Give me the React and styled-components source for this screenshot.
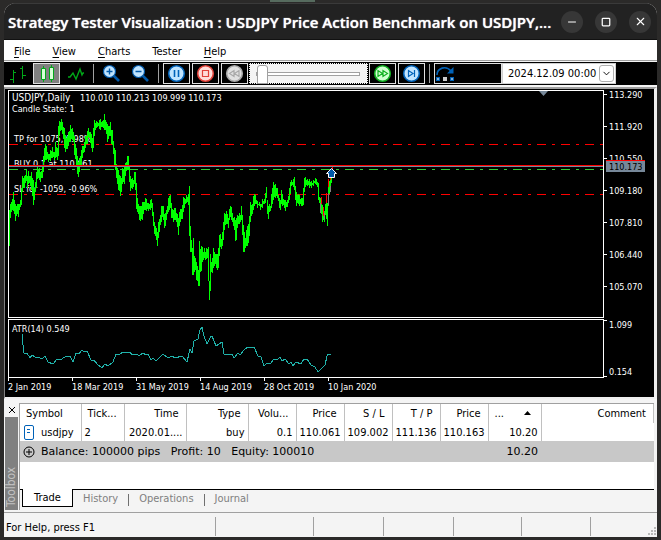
import React from 'react';
import styled, { createGlobalStyle } from 'styled-components';
import { FiMinus, FiSquare, FiX, FiChevronDown } from 'react-icons/fi';

const ui = '"DejaVu Sans Condensed", "DejaVu Sans", sans-serif';

const GlobalStyle = createGlobalStyle`
    * {
        box-sizing: border-box;
    }
    body {
        margin: 0;
        min-height: 100vh;
        background: #2b2a29;
        font-family: ${ui};
        font-size: 11px;
        color: #000;
    }
    button, select, input {
        font: inherit;
        color: inherit;
        margin: 0;
        padding: 0;
    }
`;

const Desktop = styled.div`
    min-height: 100vh;
    padding: 3px 4px;
    display: flex;
    flex-direction: column;
    background: linear-gradient(#566b5e, #566b5e) no-repeat 270px 0 / 45px 2px;
`;

const Window = styled.main`
    flex: 1;
    display: flex;
    flex-direction: column;
    background: #f4f4f4;
    border-radius: 12px 12px 0 0;
    overflow: hidden;
`;

const TitleBar = styled.header`
    height: 37px;
    padding: 0 6px 0 4px;
    display: flex;
    align-items: center;
    justify-content: space-between;
    background: #222;
    border-top: 1px solid #3a3a3a;
    border-bottom: 1px solid #111;
`;

const Title = styled.h1`
    margin: 0;
    color: #fff;
    font: 600 15px/22px "Open Sans", sans-serif;
    text-shadow: 0 0 1px #fff;
    white-space: nowrap;
`;

const WindowButtons = styled.div`
    display: flex;
    gap: 12px;
`;

const WindowButton = styled.button`
    width: 22px;
    height: 22px;
    display: flex;
    align-items: center;
    justify-content: center;
    border: 0;
    border-radius: 50%;
    background: #373737;
    color: #fff;
`;

const MenuBar = styled.nav`
    height: 21px;
    padding: 3px 10px 0;
    display: flex;
    align-items: center;
    gap: 22px;
    background: #fff;
    border-bottom: 1px solid #a0a0a0;
`;

const MenuItem = styled.button`
    border: 0;
    background: none;
    line-height: 16px;
    u {
        text-underline-offset: 2px;
    }
`;

const Toolbar = styled.div`
    height: 23px;
    margin-top: 1px;
    padding: 1px 2px 1px 0;
    display: flex;
    align-items: stretch;
    gap: 2px;
    background: #000;
`;

const ToolButton = styled.button`
    width: ${(p) => p.$width || 27}px;
    display: flex;
    align-items: center;
    justify-content: ${(p) => (p.$width ? 'flex-start' : 'center')};
    background: ${(p) => (p.$active ? '#808080' : '#000')};
    border: 1px solid ${(p) => (p.$flat ? 'transparent' : '#e0e0e0')};
`;

const Separator = styled.span`
    width: 1px;
    margin: 1px 2px;
    background: #a0a0a0;
`;

const SpeedBox = styled.div`
    flex: 0 1 119px;
    margin: 0 -1px;
    display: flex;
    align-items: center;
    background: #f4f4f4;
    border: 1px dotted #000;
`;

const Speed = styled.input`
    appearance: none;
    width: 100%;
    height: 19px;
    padding: 0 7px 0 6px;
    background: none;
    &::-webkit-slider-runnable-track {
        height: 4px;
        background: #fff;
        border: 1px solid #a0a0a0;
    }
    &::-webkit-slider-thumb {
        appearance: none;
        width: 11px;
        height: 19px;
        margin-top: -8px;
        background: #fff;
        border: 1px solid #a0a0a0;
        border-radius: 3px 3px 0 0;
    }
`;

const DateBox = styled.div`
    position: relative;
    width: 114px;
    margin-left: -2px;
    background: #fff;
    border: 1px solid #d0d0d0;
`;

const DateSelect = styled.select`
    appearance: none;
    width: 100%;
    height: 100%;
    padding: 0 14px 0 5px;
    border: 0;
    background: none;
`;

const DateArrow = styled.span`
    position: absolute;
    top: 1px;
    right: 1px;
    bottom: 1px;
    width: 15px;
    display: flex;
    align-items: center;
    justify-content: center;
    border: 1px solid #b0b0b0;
    border-radius: 3px;
    pointer-events: none;
`;

const ChartArea = styled.section`
    margin-top: 2px;
    padding: 1px 0 6px 3px;
    background: #000;
    border-style: solid;
    border-color: #a0a0a0 #f0f0f0 #f0f0f0 #808080;
    border-width: 2px 3px 2px 1px;
`;

const ChartRow = styled.div`
    display: grid;
    grid-template-columns: 1fr 50px;
    margin-top: ${(p) => p.$gap || 0}px;
    svg {
        display: block;
        width: 100%;
        font-size: 9px;
        fill: #fff;
    }
`;

const Plot = styled.div`
    border: 1px solid #fff;
`;

const Dates = styled.div`
    display: flex;
    height: 13px;
`;

const DateMark = styled.span`
    width: 64px;
    flex: none;
    padding-top: 3px;
    font-size: 9px;
    line-height: 12px;
    color: #fff;
    white-space: nowrap;
    background: linear-gradient(#fff, #fff) no-repeat 0 0 / 1px 3px;
`;

const Toolbox = styled.section`
    display: flex;
    flex: 1;
    margin-top: 4px;
    padding: 0 3px 2px 1px;
`;

const Side = styled.div`
    width: 14px;
    display: flex;
    flex-direction: column;
`;

const CloseButton = styled.button`
    height: 14px;
    display: flex;
    align-items: center;
    justify-content: center;
    border: 0;
    background: none;
`;

const SideLabel = styled.div`
    flex: 1;
    margin-right: 1px;
    padding-top: 3px;
    writing-mode: vertical-rl;
    transform: rotate(180deg);
    background: #808080;
    color: #c0c0c0;
    font-size: 12px;
    line-height: 13px;
`;

const Panel = styled.div`
    flex: 1;
    min-width: 0;
    display: flex;
    flex-direction: column;
    border-top: 1px solid #a0a0a0;
    border-left: 1px solid #a0a0a0;
`;

const TableBox = styled.div`
    flex: 1;
    background: #fff;
`;

const Trades = styled.table`
    width: 100%;
    table-layout: fixed;
    border-collapse: collapse;
    th, td {
        height: 18px;
        padding: 0 3px;
        border-right: 1px solid #c0c0c0;
        font-weight: normal;
        text-align: right;
        white-space: nowrap;
        overflow: hidden;
    }
    th {
        height: 19px;
        padding: 0 7px 0 6px;
    }
    tbody td:last-child {
        border-right: 0;
    }
    th:nth-child(-n + 2), td:nth-child(-n + 2), th:nth-child(10) {
        text-align: left;
    }
    th svg {
        float: right;
        margin: 4px 3px 0 0;
    }
`;

const Summary = styled.tr`
    background: #c8c8c8;
    font-family: "DejaVu Sans", sans-serif;
    && td {
        height: 21px;
        border: 0;
        text-align: right;
    }
    && td:first-child {
        text-align: left;
    }
`;

const Cell = styled.span`
    display: flex;
    align-items: center;
    gap: ${(p) => p.$gap}px;
    white-space: pre;
`;

const Tabs = styled.div`
    display: flex;
    height: 21px;
    border-top: 1px solid #000;
    padding-left: 2px;
`;

const Tab = styled.button`
    height: 18px;
    margin-top: -1px;
    padding: 0 ${(p) => (p.$active ? 11 : 10)}px;
    border: ${(p) => (p.$active ? '1px solid #000' : '0')};
    border-top: 0;
    background: ${(p) => (p.$active ? '#fff' : 'none')};
    color: ${(p) => (p.$active ? '#000' : '#808080')};
`;

const TabLine = styled.span`
    width: 1px;
    height: 12px;
    margin-top: 4px;
    background: #707070;
`;

const StatusBar = styled.footer`
    height: 25px;
    display: grid;
    grid-template-columns: 212px 98px 70px 70px 68px 69px 1fr;
    padding-top: 4px;
    border-top: 1px solid #a0a0a0;
`;

const StatusCell = styled.div`
    padding-left: 2px;
    height: 19px;
    line-height: 22px;
    border-right: 1px solid #a0a0a0;
    white-space: nowrap;
    &:last-child {
        display: flex;
        align-items: flex-end;
        justify-content: flex-end;
        border: 0;
    }
`;

/* daily bars: x, high, low */
const BARS = [
    [0, 119, 155], [1, 113, 127], [2, 111, 121], [4, 101, 120], [6, 113, 130], [8, 113, 123], [9, 113, 126], [11, 109, 116],
    [12, 97, 114], [13, 85, 101], [15, 85, 97], [17, 79, 90], [18, 85, 97], [19, 80, 93], [21, 85, 95], [22, 81, 99],
    [24, 89, 114], [25, 97, 109], [27, 81, 97], [28, 76, 88], [30, 77, 89], [31, 81, 91], [33, 74, 87], [34, 65, 81],
    [35, 57, 71], [36, 53, 69], [37, 55, 69], [39, 63, 71], [41, 59, 70], [43, 56, 67], [45, 61, 69], [46, 51, 67],
    [48, 57, 69], [49, 35, 65], [50, 30, 44], [52, 28, 39], [53, 31, 43], [55, 37, 57], [56, 44, 61], [58, 45, 58],
    [59, 41, 55], [61, 34, 51], [63, 37, 49], [64, 41, 51], [65, 45, 64], [67, 57, 75], [68, 65, 83], [69, 71, 86],
    [70, 67, 81], [72, 59, 74], [73, 55, 67], [75, 51, 61], [76, 45, 57], [78, 40, 53], [79, 37, 46], [81, 41, 52],
    [82, 43, 57], [83, 47, 61], [84, 37, 57], [85, 29, 45], [87, 30, 37], [88, 31, 36], [90, 29, 38], [91, 28, 39],
    [93, 30, 36], [94, 29, 37], [95, 23, 39], [97, 31, 43], [98, 33, 51], [99, 35, 48], [101, 31, 45], [102, 39, 53],
    [103, 39, 54], [105, 57, 75], [106, 59, 79], [107, 73, 87], [108, 77, 93], [109, 79, 99], [111, 85, 105], [112, 87, 101],
    [113, 77, 93], [115, 75, 93], [116, 72, 85], [118, 65, 79], [119, 65, 79], [120, 75, 91], [121, 85, 100], [123, 87, 98],
    [124, 89, 96], [125, 81, 93], [126, 81, 99], [127, 92, 118], [128, 107, 121], [130, 115, 129], [131, 115, 130],
    [133, 111, 129], [134, 111, 123], [136, 107, 119], [137, 108, 120], [139, 112, 120], [141, 109, 119], [142, 108, 117],
    [143, 112, 125], [144, 121, 135], [145, 131, 143], [146, 135, 145], [147, 137, 149], [148, 141, 155], [149, 131, 147],
    [150, 128, 141], [152, 115, 131], [153, 115, 126], [154, 115, 129], [155, 123, 137], [156, 122, 135], [157, 119, 129],
    [159, 107, 121], [160, 105, 119], [161, 104, 117], [162, 112, 127], [164, 119, 131], [165, 117, 129], [166, 117, 129],
    [168, 123, 136], [169, 127, 144], [170, 121, 135], [171, 118, 131], [173, 114, 128], [174, 106, 121], [175, 107, 117],
    [177, 104, 112], [179, 103, 114], [180, 95, 145], [181, 135, 161], [182, 149, 161], [183, 157, 184], [184, 147, 184],
    [185, 165, 181], [186, 167, 179], [187, 171, 189], [188, 175, 190], [189, 179, 195], [190, 150, 195], [191, 158, 181],
    [192, 155, 180], [193, 156, 171], [194, 161, 169], [195, 157, 167], [196, 161, 169], [197, 157, 168], [198, 158, 167],
    [199, 156, 190], [200, 190, 209], [201, 163, 200], [202, 171, 181], [203, 167, 182], [204, 157, 177], [205, 161, 175],
    [206, 163, 173], [207, 163, 177], [208, 163, 179], [209, 157, 177], [210, 144, 165], [211, 143, 156], [212, 148, 158],
    [213, 141, 155], [214, 131, 149], [215, 122, 139], [217, 120, 133], [218, 123, 133], [219, 127, 137], [220, 118, 129],
    [221, 115, 126], [222, 116, 129], [223, 122, 131], [224, 127, 135], [225, 126, 139], [226, 129, 150], [227, 127, 149],
    [228, 124, 137], [230, 122, 133], [231, 124, 131], [232, 115, 129], [233, 124, 144], [234, 134, 161], [235, 141, 161],
    [236, 147, 157], [237, 139, 155], [238, 135, 155], [239, 133, 152], [240, 125, 145], [241, 111, 131], [243, 113, 123],
    [244, 105, 119], [245, 103, 115], [246, 104, 113], [248, 110, 117], [250, 111, 115], [251, 113, 119], [253, 108, 117],
    [255, 108, 113], [256, 102, 112], [257, 96, 107], [258, 109, 123], [259, 115, 128], [260, 113, 121], [261, 115, 120],
    [262, 103, 117], [263, 97, 113], [264, 91, 109], [266, 93, 107], [267, 97, 105], [268, 97, 107], [270, 107, 117],
    [271, 109, 119], [272, 99, 113], [273, 103, 115], [275, 109, 117], [276, 109, 120], [278, 109, 116], [279, 105, 112],
    [280, 97, 109], [281, 91, 103], [282, 89, 95], [284, 88, 96], [285, 86, 99], [286, 95, 109], [287, 101, 115],
    [289, 103, 113], [290, 104, 115], [292, 107, 115], [293, 107, 115], [294, 97, 114], [295, 87, 101], [296, 86, 96],
    [298, 88, 95], [300, 88, 97], [302, 90, 97], [304, 89, 95], [306, 87, 93], [307, 88, 94], [308, 91, 96],
    [309, 92, 109], [310, 106, 112], [311, 107, 118], [312, 106, 123], [313, 114, 131], [315, 120, 131], [316, 113, 124],
    [317, 109, 128], [318, 112, 135], [319, 96, 115], [320, 90, 103], [321, 89, 99], [322, 79, 92], [323, 75, 82],
];

const ATR =
    '13,14 14,25 15,33 18,33 21,38 23,35 26,37 29,37 33,39 36,36 39,42 44,44 48,39 51,40 56,37 61,36 64,42 67,33 70,34 73,30 75,32 78,31 82,40 85,40 88,44 93,48 96,44 99,46 104,42 107,34 110,35 114,32 121,32 123,35 128,34 130,36 134,33 137,35 139,34 142,40 144,38 147,41 151,37 154,34 159,38 163,36 166,38 173,36 178,42 181,29 183,33 185,21 189,19 191,10 193,7 195,16 198,24 202,16 203,16 207,26 213,22 215,34 219,35 223,34 225,38 229,33 231,35 235,30 239,27 242,28 245,27 249,36 252,37 255,46 258,43 261,44 265,39 268,40 271,37 273,41 276,39 280,44 282,42 284,46 287,42 292,44 295,39 298,39 302,45 306,47 309,52 313,48 316,45 318,36 319,34 322,34';

const MARKS = ['2 Jan 2019', '18 Mar 2019', '31 May 2019', '14 Aug 2019', '28 Oct 2019', '10 Jan 2020'];
const PRICES = ['113.290', '111.920', '110.550', '109.180', '107.810', '106.440', '105.070'];
const COLUMNS = [
    ['Symbol', 61], ['Tick...', 43], ['Time', 62], ['Type', 62], ['Volu...', 48], ['Price', 48],
    ['S / L', 48], ['T / P', 48], ['Price', 48], ['...', 53], ['Comment'],
];
const TRADE = ['2', '2020.01....', 'buy', '0.1', '110.061', '109.002', '111.136', '110.163', '10.20', ''];

const barPath = BARS.map(([x, hi, lo], i) => {
    const next = BARS[i + 1];
    let d = `M${x}.5 ${hi}V${lo}`;
    if (next && next[0] - x > 1) {
        d += `M${x + 1}.5 ${Math.round((hi + next[1]) / 2) + 2}V${Math.round((lo + next[2]) / 2) - 2}`;
    }
    return d;
}).join('');

const Round = ({ stroke, fill, children }) => (
    <svg width="19" height="19" viewBox="0 0 19 19" fill="none" stroke={stroke} strokeWidth="1.2">
        <circle cx="9.5" cy="9.5" r="7.8" fill={fill} strokeWidth="1.6" />
        {children}
    </svg>
);

const Magnifier = ({ plus }) => (
    <svg width="19" height="19" viewBox="0 0 19 19" fill="none" stroke="#0058a8">
        <path d="M11.5 11.5L17 17" strokeWidth="2.6" />
        <circle cx="7.5" cy="7.5" r="6" fill="#c0e4ff" strokeWidth="1.2" />
        <path d={plus ? 'M4.5 7.5h6M7.5 4.5v6' : 'M4.5 7.5h6'} strokeWidth="1.4" />
    </svg>
);

const PriceChart = () => (
    <ChartRow>
        <Plot>
            <svg height="226">
                <text x="3" y="10" fontSize="10">USDJPY,Daily</text>
                <text x="71" y="10">110.010 110.213 109.999 110.173</text>
                <text x="3" y="21">Candle State: 1</text>
                <text x="5" y="51">TP for 1075, 0.98%</text>
                <text x="5" y="76">BUY 0.1 at 110.061</text>
                <text x="5" y="101">SL for -1059, -0.96%</text>
                <g strokeDasharray="9 6 3 6" fill="none">
                    <path d="M0 53.5H2000" stroke="#f00" />
                    <path d="M0 78.5H2000" stroke="#32cd32" />
                    <path d="M0 103.5H2000" stroke="#f00" />
                </g>
                <g shapeRendering="crispEdges" fill="none">
                    <path d={barPath} stroke="#0f0" />
                    <path d="M312.5 106v7M314.5 116v9M317.5 102v10M319.5 88v8M321.5 80v9M323.5 74v9" stroke="#f00" />
                    <path d="M311.5 112v10M315.5 122v6M319.5 102v12M321.5 95v6" stroke="#808080" />
                </g>
                <rect y="74" width="100%" height="1" fill="#f00" />
                <rect y="75" width="100%" height="1" fill="#778899" />
                <path d="M322.5 77.5L327.5 82.5H325.5V86.5H319.5V82.5H317.5Z" fill="#0058a8" stroke="#fff" />
                <path d="M530 0h9l-4.5 5z" fill="#778899" />
            </svg>
        </Plot>
        <svg height="228">
            {PRICES.map((p, i) => (
                <g key={p}>
                    <path d={`M0 ${4.5 + i * 32}h3`} stroke="#fff" />
                    <text x="5" y={8 + i * 32}>{p}</text>
                </g>
            ))}
            <path d="M2 70h39v12H2z" fill="#778899" />
            <path d="M2 70.5h39" stroke="#f00" />
            <text x="5" y="80" fill="#000">110.173</text>
        </svg>
    </ChartRow>
);

const AtrChart = () => (
    <ChartRow $gap={1}>
        <Plot>
            <svg height="57">
                <text x="3" y="12">ATR(14) 0.549</text>
                <polyline points={ATR} fill="none" stroke="#20b2aa" shapeRendering="crispEdges" />
            </svg>
        </Plot>
        <svg height="59">
            <path d="M0 1.5h3M0 57.5h3" stroke="#fff" />
            <text x="5" y="9">1.099</text>
            <text x="5" y="56">0.154</text>
        </svg>
    </ChartRow>
);

const App = () => {
    return (
        <Desktop>
            <GlobalStyle />
            <Window>
                <TitleBar>
                    <Title>Strategy Tester Visualization : USDJPY Price Action Benchmark on USDJPY,...</Title>
                    <WindowButtons>
                        <WindowButton aria-label="Minimize"><FiMinus size={12} /></WindowButton>
                        <WindowButton aria-label="Maximize"><FiSquare size={10} strokeWidth={3} /></WindowButton>
                        <WindowButton aria-label="Close"><FiX size={13} /></WindowButton>
                    </WindowButtons>
                </TitleBar>
                <MenuBar>
                    <MenuItem><u>F</u>ile</MenuItem>
                    <MenuItem><u>V</u>iew</MenuItem>
                    <MenuItem><u>C</u>harts</MenuItem>
                    <MenuItem>Tester</MenuItem>
                    <MenuItem><u>H</u>elp</MenuItem>
                </MenuBar>
                <Toolbar>
                    <ToolButton $flat aria-label="Bars">
                        <svg width="18" height="18" viewBox="0 0 18 18" fill="none" stroke="#00a818">
                            <path d="M4.5 5V18M1 14.5h3.5M4.5 7.5H7M13.5 1V14M11 3.5h2.5M13.5 10.5H17" />
                        </svg>
                    </ToolButton>
                    <ToolButton $active aria-label="Candles">
                        <svg width="16" height="18" viewBox="0 0 16 18" fill="#d8ffd8" stroke="#00a818">
                            <path d="M4.5 1v16M12.5 0v17" />
                            <path d="M2.5 3.5h4v11h-4zM10.5 2.5h4v12h-4z" />
                        </svg>
                    </ToolButton>
                    <ToolButton $flat aria-label="Line">
                        <svg width="18" height="18" viewBox="0 0 18 18" fill="none" stroke="#00a818" strokeWidth="1.4">
                            <path d="M1 12h2l3-4 3 6 4-10 2 6 1-2h1" />
                        </svg>
                    </ToolButton>
                    <Separator />
                    <ToolButton $flat aria-label="Zoom in"><Magnifier plus /></ToolButton>
                    <ToolButton $flat aria-label="Zoom out"><Magnifier /></ToolButton>
                    <Separator />
                    <ToolButton aria-label="Pause">
                        <Round stroke="#0062b8" fill="#c0e4ff"><path d="M7.5 6v7M11.5 6v7" strokeWidth="1.6" /></Round>
                    </ToolButton>
                    <ToolButton aria-label="Stop">
                        <Round stroke="#e04038" fill="#ffdcd8"><path d="M6.5 6.5h6v6h-6z" /></Round>
                    </ToolButton>
                    <ToolButton aria-label="Slower">
                        <Round stroke="#a8a8a8" fill="#e0e0e0"><path d="M9 6.5v6L4.5 9.5zM14 6.5v6L9.5 9.5z" /></Round>
                    </ToolButton>
                    <SpeedBox>
                        <Speed type="range" min="0" max="32" defaultValue="0" aria-label="Speed" />
                    </SpeedBox>
                    <ToolButton aria-label="Faster">
                        <Round stroke="#10b020" fill="#d0ffd0"><path d="M5 6.5v6L9.5 9.5zM10 6.5v6L14.5 9.5z" /></Round>
                    </ToolButton>
                    <ToolButton aria-label="Next">
                        <Round stroke="#0062b8" fill="#c0e4ff"><path d="M6.5 6.5v6L11 9.5zM12.5 6v7" /></Round>
                    </ToolButton>
                    <Separator />
                    <ToolButton $width={68} aria-label="Skip to">
                        <svg width="20" height="19" viewBox="0 0 20 19" fill="none" stroke="#0062b8">
                            <path d="M2 11C2 4 11 1 16 7" strokeWidth="1.6" />
                            <path d="M18.5 3v6.5H12z" fill="#0062b8" stroke="none" />
                            <path d="M1 13h4v4H1zM15 13h4v4h-4z" fill="#0062b8" stroke="none" />
                            <path d="M8 13h4v4H8z" fill="#ccc" stroke="none" />
                            <path d="M2 15h2M16 15h2" stroke="#fff" />
                        </svg>
                    </ToolButton>
                    <DateBox>
                        <DateSelect aria-label="Date"><option>2024.12.09 00:00</option></DateSelect>
                        <DateArrow><FiChevronDown size={11} /></DateArrow>
                    </DateBox>
                </Toolbar>
                <ChartArea>
                    <PriceChart />
                    <AtrChart />
                    <Dates>
                        {MARKS.map((m) => <DateMark key={m}>{m}</DateMark>)}
                    </Dates>
                </ChartArea>
                <Toolbox>
                    <Side>
                        <CloseButton aria-label="Close toolbox">
                            <svg width="8" height="8" viewBox="0 0 8 8" stroke="#000"><path d="M1 1l6 6M7 1L1 7" /></svg>
                        </CloseButton>
                        <SideLabel>Toolbox</SideLabel>
                    </Side>
                    <Panel>
                        <TableBox>
                            <Trades>
                                <colgroup>
                                    {COLUMNS.map(([, width], i) => <col key={i} width={width} />)}
                                </colgroup>
                                <thead>
                                    <tr>
                                        {COLUMNS.map(([name], i) => (
                                            <th key={i}>
                                                {i === 9 && <svg width="7" height="4"><path d="M0 4L3.5 0L7 4z" /></svg>}
                                                {name}
                                            </th>
                                        ))}
                                    </tr>
                                </thead>
                                <tbody>
                                    <tr>
                                        <td>
                                            <Cell $gap={6}>
                                                <svg width="12" height="15" viewBox="0 0 12 15" fill="#fff" stroke="#0062b8">
                                                    <rect x="1.5" y=".5" width="9" height="14" rx="1.5" />
                                                    <path d="M4 4.5h3M4 7.5h3" />
                                                </svg>
                                                usdjpy
                                            </Cell>
                                        </td>
                                        {TRADE.map((t, i) => <td key={i}>{t}</td>)}
                                    </tr>
                                    <Summary>
                                        <td colSpan={9}>
                                            <Cell $gap={6}>
                                                <svg width="12" height="12" viewBox="0 0 12 12" fill="none" stroke="#000">
                                                    <circle cx="6" cy="6" r="5" />
                                                    <path d="M3 6h6M6 3v6" />
                                                </svg>
                                                {'Balance: 100000 pips   Profit: 10   Equity: 100010'}
                                            </Cell>
                                        </td>
                                        <td>10.20</td>
                                        <td />
                                    </Summary>
                                </tbody>
                            </Trades>
                        </TableBox>
                        <Tabs>
                            <Tab $active>Trade</Tab>
                            <Tab>History</Tab>
                            <TabLine />
                            <Tab>Operations</Tab>
                            <TabLine />
                            <Tab>Journal</Tab>
                        </Tabs>
                    </Panel>
                </Toolbox>
                <StatusBar>
                    <StatusCell>For Help, press F1</StatusCell>
                    <StatusCell />
                    <StatusCell />
                    <StatusCell />
                    <StatusCell />
                    <StatusCell />
                    <StatusCell>
                        <svg width="9" height="9" fill="#b8b8b8">
                            <path d="M6 0h2v2H6zM3 3h2v2H3zM6 3h2v2H6zM0 6h2v2H0zM3 6h2v2H3zM6 6h2v2H6z" />
                        </svg>
                    </StatusCell>
                </StatusBar>
            </Window>
        </Desktop>
    );
};

export default App;
